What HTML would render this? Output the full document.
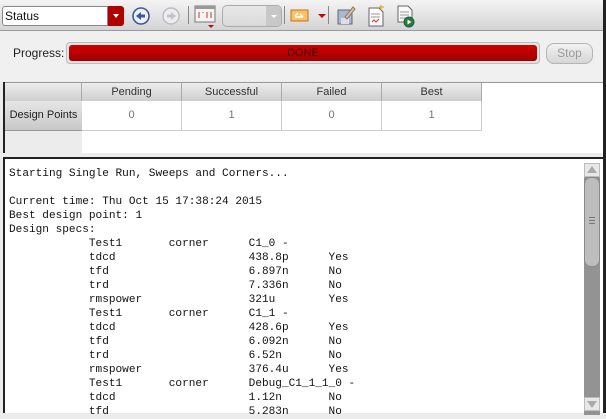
<!DOCTYPE html>
<html><head><style>
*{margin:0;padding:0;box-sizing:border-box}
body{width:606px;height:413px;overflow:hidden;background:#ececec;font-family:"Liberation Sans",sans-serif;position:relative}
.abs{position:absolute}
#tb{left:0;top:0;width:603px;height:31px;background:linear-gradient(#f4f4f4,#d4d4d4);border-bottom:1px solid #9a9a9a}
#rb{left:603px;top:0;width:3px;height:413px;background:#222}
.sep{width:1px;height:18px;background:#888;top:6px}
#prog{left:0;top:31px;width:603px;height:50px;background:#f0f0f0}
#tbl{left:3px;top:82px;width:600px;height:71px;background:#fff;border-left:2px solid #222}
.hd{top:1px;height:18px;background:linear-gradient(#ececec,#cfcfcf);border-right:1px solid #aaa;font-size:11px;color:#333;text-align:center;line-height:19px}
.cell{top:19px;height:30px;border-right:1px solid #ccc;border-bottom:1px solid #ccc;font-size:11px;color:#777;text-align:center;line-height:28px}
#log{left:3px;top:157px;width:600px;height:256px;background:#fff;border-top:2px solid #222;border-left:2px solid #222}
pre{font-family:"Liberation Mono",monospace;font-size:11.1px;line-height:14px;color:#111;position:absolute;left:4px;top:8px}
</style></head><body>
<div id="tb" class="abs">
 <div class="abs" style="left:2px;top:6px;width:106px;height:20px;background:#fff;border:1px solid #888;border-radius:3px 0 0 3px;font-size:12px;line-height:18px;padding-left:2px;color:#111">Status</div>
 <div class="abs" style="left:108px;top:6px;width:16px;height:20px;background:#b00000;border-radius:0 3px 3px 0"></div>
 <div class="abs" style="left:113px;top:14px;width:0;height:0;border-left:3px solid transparent;border-right:3px solid transparent;border-top:4px solid #fff"></div>
 <svg class="abs" style="left:131px;top:6px" width="20" height="20"><circle cx="10" cy="10" r="8" fill="#eef" stroke="#3b5a9a" stroke-width="1.6"/><path d="M5 10l5-4v2.5h4v3h-4v2.5z" fill="#3b5a9a"/></svg>
 <svg class="abs" style="left:161px;top:6px" width="20" height="20"><circle cx="10" cy="10" r="8" fill="#eee" stroke="#b8bcc8" stroke-width="1.4"/><path d="M15 10l-5-4v2.5H6v3h4v2.5z" fill="#c4c4c8"/></svg>
 <div class="abs sep" style="left:188px"></div>
 <svg class="abs" style="left:194px;top:5px" width="22" height="24"><rect x="1" y="1" width="20" height="16" fill="#f4f4f4" stroke="#777"/><rect x="1" y="1" width="20" height="3" fill="#999"/><path d="M5 7v6M9 7v1M13 7v6M17 7v6" stroke="#c33"/><path d="M14 20h6l-3 3z" fill="#c00"/></svg>
 <div class="abs" style="left:222px;top:5px;width:60px;height:22px;border:1px solid #aaa;border-radius:5px;background:linear-gradient(#e8e8e8,#dadada)"></div>
 <div class="abs" style="left:266px;top:6px;width:15px;height:20px;background:#c8c8c8;border-radius:0 4px 4px 0"></div>
 <div class="abs" style="left:271px;top:15px;border-left:3px solid transparent;border-right:3px solid transparent;border-top:3px solid #fff"></div>
 <div class="abs sep" style="left:284px"></div>
 <svg class="abs" style="left:290px;top:8px" width="20" height="16"><rect x="1" y="2" width="17" height="11" fill="#f6c36a" stroke="#d07010"/><path d="M5 9h8M10 6l3 3M5 8l3-3" stroke="#fff" stroke-width="1.5"/></svg>
 <div class="abs" style="left:318px;top:14px;border-left:4px solid transparent;border-right:4px solid transparent;border-top:4px solid #c00"></div>
 <div class="abs sep" style="left:328px"></div>
 <svg class="abs" style="left:336px;top:5px" width="20" height="22"><rect x="2" y="5" width="14" height="14" fill="#a8b8d0" stroke="#667"/><rect x="5" y="13" width="8" height="6" fill="#dde"/><path d="M9 12l8-10 2 2-8 10z" fill="#e0c090" stroke="#876"/></svg>
 <svg class="abs" style="left:366px;top:4px" width="20" height="24"><path d="M3 4h10l4 4v14H3z" fill="#fafafa" stroke="#666"/><path d="M5 10h9M5 13h9" stroke="#999"/><path d="M6 18l2-2 2 2 3-3" stroke="#c33" fill="none"/><path d="M15 1v5M13 3h5" stroke="#e90"/></svg>
 <svg class="abs" style="left:396px;top:4px" width="22" height="24"><path d="M2 2h10l4 4v12H2z" fill="#fafafa" stroke="#666"/><path d="M4 8h9M4 11h9M4 14h6" stroke="#999"/><circle cx="13" cy="18" r="5" fill="#2a7a3a" stroke="#164"/><path d="M11.5 15.5v5l4-2.5z" fill="#fff"/></svg>
</div>
<div id="rb" class="abs"></div>
<div id="prog" class="abs">
 <div class="abs" style="left:13px;top:15px;font-size:12px;color:#222">Progress:</div>
 <div class="abs" style="left:66px;top:11px;width:474px;height:22px;border:1px solid #bbb;border-radius:4px;background:#e4e4e4;padding:2px">
  <div style="width:100%;height:100%;background:linear-gradient(#d00000,#a00000);border-radius:3px;font-size:11px;line-height:16px;text-align:center;color:#400">DONE</div></div>
 <div class="abs" style="left:546px;top:12px;width:47px;height:21px;border:1px solid #b4b4b4;border-radius:8px;background:linear-gradient(#f2f2f2,#d6d6d6);font-size:12px;color:#999;text-align:center;line-height:19px">Stop</div>
</div>
<div id="tbl" class="abs">
 <div class="abs" style="left:0;top:0;width:598px;height:1px;background:#999"></div>
 <div class="abs hd" style="left:0;width:77px"></div>
 <div class="abs hd" style="left:77px;width:100px">Pending</div>
 <div class="abs hd" style="left:177px;width:100px">Successful</div>
 <div class="abs hd" style="left:277px;width:100px">Failed</div>
 <div class="abs hd" style="left:377px;width:100px">Best</div>
 <div class="abs" style="left:0;top:19px;width:77px;height:30px;background:linear-gradient(#e6e6e6,#c8c8c8);border-bottom:1px solid #999;font-size:11px;line-height:28px;color:#222;text-align:center">Design Points</div>
 <div class="abs" style="left:0;top:49px;width:77px;height:22px;background:#ececec"></div>
 <div class="abs cell" style="left:77px;width:100px">0</div>
 <div class="abs cell" style="left:177px;width:100px">1</div>
 <div class="abs cell" style="left:277px;width:100px">0</div>
 <div class="abs cell" style="left:377px;width:100px">1</div>
</div>
<div class="abs" style="left:0;top:153px;width:603px;height:4px;background:#ececec"></div>
<div id="log" class="abs">
<pre>Starting Single Run, Sweeps and Corners...

Current time: Thu Oct 15 17:38:24 2015
Best design point: 1
Design specs:
            Test1       corner      C1_0 -
            tdcd                    438.8p      Yes
            tfd                     6.897n      No
            trd                     7.336n      No
            rmspower                321u        Yes
            Test1       corner      C1_1 -
            tdcd                    428.6p      Yes
            tfd                     6.092n      No
            trd                     6.52n       No
            rmspower                376.4u      Yes
            Test1       corner      Debug_C1_1_1_0 -
            tdcd                    1.12n       No
            tfd                     5.283n      No</pre>
 <div class="abs" style="left:579px;top:4px;width:16px;height:252px;background:#939393"></div>
 <div class="abs" style="left:579px;top:4px;width:16px;height:14px;background:#e8e8e8;border:1px solid #bbb"></div>
 <div class="abs" style="left:582px;top:7px;border-left:5px solid transparent;border-right:5px solid transparent;border-bottom:7px solid #aaa"></div>
 <div class="abs" style="left:579px;top:18px;width:16px;height:90px;background:#bdbdbd;border:1px solid #888;border-radius:7px"></div>
 <div class="abs" style="left:584px;top:58px;width:6px;height:7px;border-top:1px solid #777;border-bottom:1px solid #777"></div>
 <div class="abs" style="left:584px;top:61px;width:6px;height:1px;background:#777"></div>
</div>
<div class="abs" style="left:584px;top:397px;width:16px;height:14px;background:#e8e8e8;border:1px solid #bbb"></div>
<div class="abs" style="left:587px;top:401px;border-left:5px solid transparent;border-right:5px solid transparent;border-top:7px solid #aaa"></div>
</body></html>
